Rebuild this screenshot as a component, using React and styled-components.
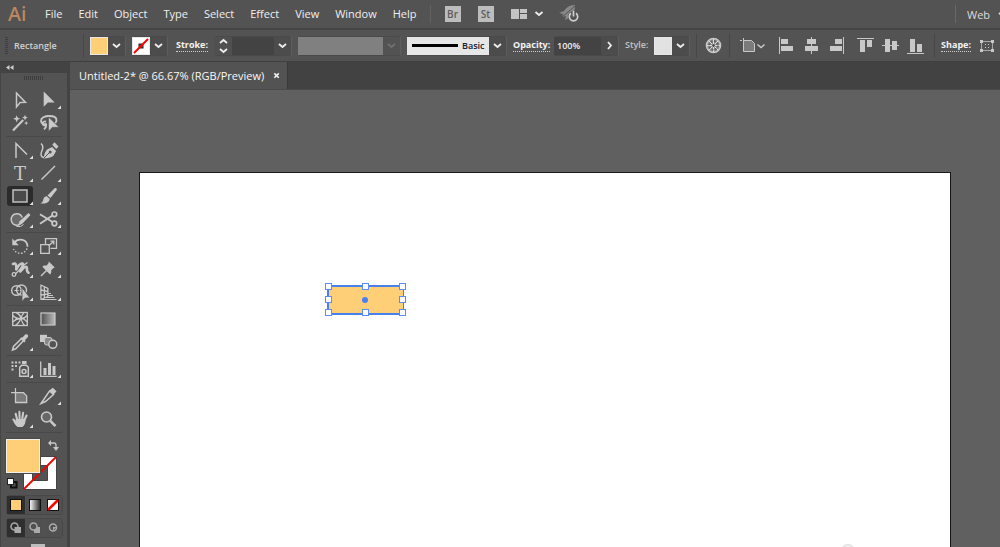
import styled, { createGlobalStyle, css } from 'styled-components';

const GlobalStyle = createGlobalStyle`
  * {
    box-sizing: border-box;
  }

  body {
    margin: 0;
    background-color: #606060;
    font-family: 'Open Sans', 'Noto Sans', sans-serif;
  }

  button,
  input {
    font-family: inherit;
    margin: 0;
    padding: 0;
    border: 0;
    border-radius: 0;
  }

  svg {
    display: block;
    flex: none;
  }
`;

const Window = styled.div`
  display: flex;
  flex-direction: column;
  height: 100vh;
  overflow: hidden;
  color: #e4e4e4;
`;

const MenuBar = styled.header`
  display: flex;
  flex: none;
  align-items: center;
  height: 30px;
  padding-left: 8px;
  background-color: #535353;
  border-bottom: 2px solid #454545;
  overflow: hidden;
`;

const Logo = styled.span`
  width: 29px;
  color: #bd8760;
  font-family: 'Noto Sans', sans-serif;
  font-size: 20px;
  font-weight: 500;
  line-height: 28px;
`;

const Menu = styled.nav`
  display: flex;
`;

const MenuItem = styled.button`
  flex: none;
  padding: 0 8px;
  background: none;
  color: #f0f0f0;
  font-size: 11px;
  line-height: 28px;
`;

const MenuTools = styled.div`
  display: flex;
  align-items: center;
  margin-left: 5px;
  padding-left: 14px;
  border-left: 1px solid #626262;
  height: 18px;
`;

const AppButton = styled.button`
  width: 16px;
  height: 16px;
  margin-right: 17px;
  background-color: #bdbdbd;
  color: #5c5c5c;
  font-size: 10px;
  font-weight: 600;
  line-height: 16px;
`;

const PlainButton = styled.button`
  display: flex;
  flex: none;
  align-items: center;
  justify-content: center;
  width: ${({ $width }) => $width}px;
  height: 22px;
  background: none;
  color: #c8c8c8;
`;

const Workspace = styled.div`
  display: flex;
  align-items: center;
  width: 45px;
  height: 18px;
  margin-left: auto;
  border-left: 1px solid #696969;
  overflow: hidden;
`;

const WorkspaceButton = styled.button`
  display: flex;
  flex: none;
  align-items: center;
  gap: 8px;
  padding-left: 11px;
  background: none;
  color: #dcdcdc;
  font-size: 11px;
`;

const ControlBar = styled.div`
  display: flex;
  flex: none;
  align-items: center;
  gap: 6px;
  height: 31px;
  padding-left: 5px;
  background-color: #535353;
  overflow: hidden;
`;

const Grip = styled.span`
  flex: none;
  width: ${({ $wide }) => ($wide ? 20 : 3)}px;
  height: ${({ $wide }) => ($wide ? 4 : 18)}px;
  background: repeating-linear-gradient(
    ${({ $wide }) => ($wide ? '90deg' : '180deg')},
    #3e3e3e 0 1px,
    #535353 1px 2px
  );
`;

const ObjectName = styled.span`
  flex: none;
  width: 63px;
  color: #d0d0d0;
  font-size: 9px;
  font-weight: 600;
`;

const Divider = styled.span`
  flex: none;
  width: 1px;
  height: 24px;
  background-color: #474747;
`;

const Label = styled.label`
  flex: none;
  width: ${({ $width }) => $width}px;
  color: ${({ $plain }) => ($plain ? '#c4c4c4' : '#f4f4f4')};
  font-size: 9px;
  font-weight: ${({ $plain }) => ($plain ? 600 : 700)};
  line-height: 12px;
  text-align: right;
  white-space: nowrap;

  span {
    display: inline-block;
    border-bottom: 1px ${({ $plain }) => ($plain ? 'solid transparent' : 'dotted #d0d0d0')};
  }
`;

const Field = styled.div`
  display: flex;
  flex: none;
  height: 20px;
  padding: 1px 0;
  background-color: #4a4a4a;
  border-right: 1px solid #5e5e5e;
  border-radius: 2px;
`;

const Swatch = styled.button`
  display: flex;
  align-items: center;
  justify-content: center;
  width: 18px;
  height: 18px;
  background-color: ${({ $color }) => $color};
  border: 1px solid #e8e8e8;
`;

const Arrow = styled.button`
  display: flex;
  align-items: center;
  justify-content: center;
  width: 17px;
  height: 18px;
  background-color: ${({ disabled }) => (disabled ? '#535353' : '#4c4c4c')};
  color: ${({ disabled }) => (disabled ? '#707070' : '#eeeeee')};
`;

const Stepper = styled.div`
  display: flex;
  flex-direction: column;
  width: 18px;
  background-color: #505050;
`;

const Step = styled.button`
  display: flex;
  align-items: center;
  justify-content: center;
  height: 9px;
  background: none;
  color: #eeeeee;
`;

const TextInput = styled.input`
  width: ${({ $width }) => $width}px;
  height: 18px;
  padding-left: 3px;
  background-color: #434343;
  color: #f0f0f0;
  font-size: 9px;
  font-weight: 600;
  outline: none;
`;

const Profile = styled.div`
  width: 85px;
  background-color: #808080;
`;

const Brush = styled.button`
  display: flex;
  align-items: center;
  gap: 4px;
  width: 82px;
  padding-left: 5px;
  background-color: #e6e6e6;
  color: #14202e;
  font-size: 9px;
  font-weight: 600;

  &::before {
    content: '';
    width: 46px;
    height: 3px;
    background-color: #000000;
  }
`;

const AlignTools = styled.div`
  display: flex;
  flex: none;
  gap: 4px;
`;

const AlignGroup = styled.div`
  display: flex;
`;

const Main = styled.div`
  display: flex;
  flex: 1;
  min-height: 0;
  border-top: 1px solid #3f3f3f;
`;

const Panel = styled.aside`
  display: flex;
  flex: none;
  flex-direction: column;
  width: 70px;
  background-color: #535353;
  border-left: 1px solid #454545;
  border-right: 3px solid #434343;
  overflow: hidden;
`;

const PanelHeader = styled.button`
  display: flex;
  flex: none;
  align-items: center;
  height: 11px;
  padding-left: 5px;
  background-color: #434343;
  color: #d0d0d0;
`;

const PanelGrip = styled.div`
  display: flex;
  flex: none;
  justify-content: center;
  padding: 3px 0 7px;
`;

const ToolGroup = styled.div`
  display: grid;
  flex: none;
  grid-template-columns: 26px 26px;
  grid-auto-rows: 23px;
  gap: 0 2px;
  align-items: center;
  margin: 0 5px;
  padding: 1px 0 2px 1px;
  border-bottom: 1px solid #494949;
`;

const ToolButton = styled.button`
  display: flex;
  align-items: center;
  justify-content: center;
  width: 26px;
  height: 20px;
  background: none;
  border-radius: 3px;
  color: #c9c9c9;

  ${({ $active }) =>
    $active &&
    css`
      background-color: #2b2b2b;
    `}
`;

const ColorArea = styled.div`
  position: relative;
  flex: none;
  width: 52px;
  height: 52px;
  margin: 6px 0 4px 5px;
`;

const FillBox = styled.button`
  position: absolute;
  top: 0;
  left: 0;
  width: 34px;
  height: 34px;
  background-color: #ffcf78;
  border: 1px solid #f4efe6;
  outline: 1px solid #4a4a4a;
`;

const StrokeBox = styled.button`
  position: absolute;
  top: 17px;
  left: 17px;
  width: 34px;
  height: 34px;
  background: none;
`;

const CornerButton = styled.button`
  position: absolute;
  top: ${({ $top }) => $top}px;
  left: ${({ $left }) => $left}px;
  background: none;
`;

const ModeRow = styled.div`
  display: flex;
  flex: none;
  gap: 1px;
  width: 57px;
  height: 20px;
  margin: 0 0 3px 5px;
  border: 1px solid #484848;
  border-radius: 3px;
`;

const ModeButton = styled.button`
  display: flex;
  flex: 1;
  align-items: center;
  justify-content: center;
  background-color: ${({ $active }) => ($active ? '#2f2f2f' : '#505050')};
`;

const ScreenMode = styled.button`
  flex: none;
  width: 14px;
  height: 10px;
  margin: 3px 0 0 30px;
  background-color: #bdbdbd;
`;

const DocumentArea = styled.main`
  display: flex;
  flex: 1;
  flex-direction: column;
  min-width: 0;
  background-color: #606060;
`;

const TabBar = styled.div`
  display: flex;
  flex: none;
  height: 28px;
  background-color: #424242;
  border-bottom: 1px solid #4a4a4a;
`;

const Tab = styled.div`
  display: flex;
  align-items: center;
  justify-content: space-between;
  width: 218px;
  padding: 0 6px 0 9px;
  background-color: #535353;
  border-right: 1px solid #3a3a3a;
  color: #f8f8f8;
  font-size: 11px;
  font-weight: 500;
  white-space: nowrap;
`;

const CloseButton = styled.button`
  display: flex;
  background: none;
  color: #f2f2f2;
`;

const Artboard = styled.section`
  position: relative;
  flex: 1;
  margin: 82px 49px 0 69px;
  background-color: #ffffff;
  border: 1px solid #191919;
  border-bottom: 0;
  overflow: hidden;
`;

const Selection = styled.div`
  position: absolute;
  top: 112px;
  left: 187px;
  width: 77px;
  height: 30px;
  background-color: #ffcf78;
  border: 2px solid #4a7ff0;
  border-right-width: 1px;
`;

const Handle = styled.i`
  position: absolute;
  top: ${({ $y }) => $y}%;
  left: ${({ $x }) => $x}%;
  width: 7px;
  height: 7px;
  margin: -4px 0 0 -4px;
  background-color: #ffffff;
  border: 1px solid #5b8bf5;
`;

const Center = styled(Handle)`
  width: 6px;
  height: 6px;
  margin: -3px 0 0 -4px;
  background-color: #4a80f5;
  border: 0;
  border-radius: 50%;
`;

const Watermark = styled.svg`
  position: absolute;
  right: 79px;
  bottom: -10px;
`;

const menuItems = ['File', 'Edit', 'Object', 'Type', 'Select', 'Effect', 'View', 'Window', 'Help'];

const handles = [
  [0, 0],
  [50, 0],
  [100, 0],
  [0, 50],
  [100, 50],
  [0, 100],
  [50, 100],
  [100, 100],
];

const stroke = { fill: 'none', stroke: 'currentColor', strokeWidth: 1.5 };

const toolGroups = [
  [
    { name: 'Selection', icon: <path {...stroke} d="M9.5 4v14l3.6-4.4 5.4-.2z" /> },
    { name: 'Direct selection', more: true, icon: <path fill="currentColor" d="M8.7 2.6v15.2l4.2-4.2h6.8z" /> },
    {
      name: 'Magic wand',
      icon: (
        <>
          <path {...stroke} strokeWidth="2.2" d="M6 18.5 16.2 8" />
          <path
            fill="currentColor"
            d="m9.7 3.2 1 2.6 2.6 1-2.6 1-1 2.6-1-2.6-2.6-1 2.6-1zM18 2.8l.8 2 2 .8-2 .8-.8 2-.8-2-2-.8 2-.8zM19.2 9l.6 1.5 1.5.6-1.5.6-.6 1.5-.6-1.5-1.5-.6 1.5-.6z"
          />
        </>
      ),
    },
    {
      name: 'Lasso',
      icon: (
        <>
          <path
            {...stroke}
            strokeWidth="1.8"
            d="M12 12.5c-3.5.2-6-1.3-6-3.8 0-2.9 3.7-4.7 8.200-4.700s7.300 1.700 7.300 4.200c0 1.200-.5 2.100-1.500 2.800M11 9.600c-1.600-.7-3.400.2-3.400 2 0 2 2.700 2.300 3.300 1 .7 1.700-.2 3.800-2.100 4.500"
          />
          <path fill="currentColor" stroke="#535353" strokeWidth=".6" d="M13.500 5v14.500l3.900-4.200H24z" />
        </>
      ),
    },
  ],
  [
    { name: 'Anchor point', more: true, icon: <path {...stroke} d="M9 19V4.500l11 11" /> },
    {
      name: 'Curvature',
      icon: (
        <>
          <path fill="currentColor" d="M8.500 19.500c.6-4 1.700-7 3.600-9l5-2.600 4 4.200-2.600 4.700c-2.500 1.800-5.800 2.600-10 2.700zM17.300 5.800 19.500 3.300l4 4.200-2.300 2.500z" />
          <path stroke="#535353" d="m8.500 19.500 6-6" />
          <circle cx="15.200" cy="13" r="1.500" fill="#535353" />
          <path {...stroke} d="M6 4.500c3 2.500 2 5.500.5 8.500-1.300 3 0 5.500 2.500 5.500" />
        </>
      ),
    },
    {
      name: 'Type',
      more: true,
      icon: (
        <text x="13" y="18" textAnchor="middle" fill="currentColor" fontFamily="'DejaVu Serif', serif" fontSize="18">
          T
        </text>
      ),
    },
    { name: 'Line segment', more: true, icon: <path {...stroke} d="M6.5 17.5 20 4" /> },
    { name: 'Rectangle', more: true, active: true, icon: <rect x="6" y="5" width="14" height="12" fill="#4a4a4a" stroke="currentColor" strokeWidth="1.4" /> },
    {
      name: 'Paintbrush',
      more: true,
      icon: <path fill="currentColor" d="M19.600 3.200c1.400-.9 2.900.6 2.100 1.900l-6.200 8-3-2.700zM11.800 11.200l2.800 2.600c.2 3.800-3.800 5.300-9.300 4.500 2.700-.8 2.600-2.500 3.200-4.600.5-1.600 1.700-2.600 3.300-2.500z" />,
    },
    {
      name: 'Shaper',
      more: true,
      icon: (
        <>
          <path fill="#6a6a6a" stroke="currentColor" strokeWidth="1.5" d="M13.500 16a5.800 5.800 0 1 1 1.800-6.600" />
          <path fill="currentColor" d="m21.500 5 2 1.900-8 8.700-4.500 2 1.600-4.300z" />
          <path {...stroke} strokeWidth="1" d="M9.500 18.500h4l3-2" />
        </>
      ),
    },
    {
      name: 'Scissors',
      more: true,
      icon: (
        <>
          <circle {...stroke} strokeWidth="1.7" cx="19.4" cy="6.3" r="2.3" />
          <circle {...stroke} strokeWidth="1.7" cx="19.4" cy="15.5" r="2.3" />
          <path {...stroke} strokeWidth="1.9" d="M5 6.2 17.5 14M5 15.8 17.5 7.5" />
        </>
      ),
    },
  ],
  [
    {
      name: 'Rotate',
      more: true,
      icon: (
        <>
          <path {...stroke} strokeWidth="1.8" d="M7.5 7.5c3.800-5 13-3.200 13 4.300" />
          <path {...stroke} strokeDasharray="1.5 1.7" d="M20 13.5c-2.300 6.300-10.500 6.300-13.500.5" />
          <path fill="currentColor" d="M5.3 3.500v6.800h6.500z" />
        </>
      ),
    },
    {
      name: 'Scale',
      more: true,
      icon: (
        <g {...stroke} strokeWidth="1.3">
          <path d="M10.5 9.500V3.700h11v9.600h-6" />
          <path d="M5.7 9.700h8.600v8.600H5.700zM13.500 11l5-4.500M15.500 6.200h3.300v3.300" />
        </g>
      ),
    },
    {
      name: 'Width',
      more: true,
      icon: (
        <>
          <path {...stroke} strokeWidth="2.6" strokeLinecap="round" strokeLinejoin="round" d="M6 6c3-1.500 3.600 1 3.300 5.500C11 8 13 5 15.500 5.500c2 .8-1.500 4.500-2.300 8 2.800-3 4.800-5.500 6.300-4.500 1.300 1-.8 4.500 2 5.700" />
          <path {...stroke} strokeWidth="1.2" d="m8 16.500 9-9.500 3.500-2.500" />
          <circle cx="7" cy="16.500" r="1.800" fill="#535353" stroke="currentColor" strokeWidth="1.300" />
        </>
      ),
    },
    {
      name: 'Puppet warp',
      more: true,
      icon: (
        <>
          <path fill="currentColor" d="m13.8 3.500 6 6-1.600.7-2 2c.3 1.900 0 3.200-1.200 4.300L7.300 8.800c1.100-1.200 2.500-1.500 4.300-1.200l1.800-2z" />
          <path {...stroke} d="m6 18 5.500-5.500" />
        </>
      ),
    },
    {
      name: 'Shape builder',
      more: true,
      icon: (
        <>
          <circle {...stroke} strokeWidth="1.4" cx="9.500" cy="9.500" r="4.800" />
          <circle {...stroke} strokeWidth="1.4" cx="14.500" cy="9" r="5" />
          <path {...stroke} strokeDasharray="1.5 1.2" strokeWidth="1.2" d="M7.5 9.500h8" />
          <path fill="currentColor" stroke="#535353" strokeWidth=".8" d="M15 6.500v14l3.200-3.500H23z" />
        </>
      ),
    },
    {
      name: 'Perspective grid',
      more: true,
      icon: (
        <>
          <path {...stroke} strokeWidth="1.3" d="M5.900 3.500v15.300M5.900 4l7 3.500v8.300M9.400 5.600v11.300M5.900 9l7 1.500M5.900 14l7-1M5.900 18.500l7-3" />
          <path {...stroke} strokeWidth="1" d="M6 18.500h15.500M10 16.500h9.500M13 14.500h5M13 12.500h3" />
        </>
      ),
    },
  ],
  [
    {
      name: 'Mesh',
      icon: (
        <>
          <rect {...stroke} strokeWidth="1.3" x="5.7" y="4.5" width="14.6" height="13" />
          <path {...stroke} strokeWidth="1.4" d="M9 4.500c6 3 6.500 7-.5 13M17 4.500c-3 3-4 8 .5 13M5.700 7.500c4 4 10 5 14.600 0M5.700 14c4-4 10-5.500 14.600 0" />
        </>
      ),
    },
    { name: 'Gradient', icon: <rect x="6" y="5" width="14" height="12" fill="url(#tool-gradient)" stroke="currentColor" strokeWidth="1.2" /> },
    {
      name: 'Eyedropper',
      more: true,
      icon: (
        <>
          <path fill="currentColor" d="m14.2 6.500 1.500-.2 2.300-2.500c1.800-1.600 4.200.8 2.700 2.500l-2.400 2.500v1.600l-1.200 1-4-3.800z" />
          <path {...stroke} d="m14 8-7.500 7.500-1 3.500 3.200-1.200L16.200 10" />
        </>
      ),
    },
    {
      name: 'Blend',
      icon: (
        <>
          <path fill="currentColor" d="M5 3.800h7V11H5z" />
          <rect x="9.5" y="6.5" width="7.5" height="7.5" rx="2" fill="#8a8a8a" stroke="currentColor" />
          <circle cx="17.8" cy="13.3" r="4" fill="#535353" stroke="currentColor" strokeWidth="1.5" />
        </>
      ),
    },
  ],
  [
    {
      name: 'Symbol sprayer',
      more: true,
      icon: (
        <>
          <path fill="currentColor" d="M4.500 3.500h2v2h-2zM8 3.500h2v2H8zM11.500 3.500h2v2h-2zM4.500 7h2v2h-2zM8 7h2v2H8zM4.500 10.500h2v2h-2zM15 3h4.500v3H15z" />
          <path {...stroke} d="M12.700 18.300v-9l2-2h4.600l2 2v9z" />
          <circle {...stroke} cx="17" cy="13.5" r="2" />
        </>
      ),
    },
    {
      name: 'Column graph',
      more: true,
      icon: (
        <>
          <path {...stroke} strokeWidth="1.3" d="M5.700 3.500v14.800h16" />
          <path fill="currentColor" d="M8.500 10h3v7h-3zM13 5h3v12h-3zM17.500 8h3v9h-3z" />
        </>
      ),
    },
  ],
  [
    {
      name: 'Artboard',
      icon: (
        <>
          <path {...stroke} strokeWidth="1.2" d="M8.500 3v6M4 7.700h8" />
          <path fill="#7a7a7a" stroke="currentColor" strokeWidth="1.3" d="M8.500 7.700h8l3.200 3.200v6.600H8.500z" />
        </>
      ),
    },
    {
      name: 'Slice',
      more: true,
      icon: (
        <>
          <path {...stroke} d="M6 18.500 14.500 6l4 3.500-8 7z" />
          <path fill="currentColor" d="m14.300 5.500 3.500-2.800 3.700 3.600-3 3.500z" />
        </>
      ),
    },
    {
      name: 'Hand',
      more: true,
      icon: (
        <>
          <path stroke="currentColor" strokeWidth="2.1" strokeLinecap="round" d="m10 11-1.300-5.300M12.600 10l-.2-6.300M15.300 10.500l.8-5.700M17.500 12l2-4.500M9.300 14.500l-3-3" />
          <path fill="currentColor" d="m8.800 10.500 9.600.5c.5 3.500-.7 6.500-3 8h-4.600c-1.900-1.500-3.500-3.200-4.600-5.800l2.600.6z" />
        </>
      ),
    },
    {
      name: 'Zoom',
      icon: (
        <>
          <circle cx="11.5" cy="9" r="5" fill="#676767" stroke="currentColor" strokeWidth="1.6" />
          <path {...stroke} strokeWidth="2.6" d="m15.300 12.800 5.200 5.400" />
        </>
      ),
    },
  ],
];

const alignGroups = [
  [
    { name: 'Align left', line: 'M2.5 1v17', bars: 'M4 3h7v5H4zM4 10h12v5H4z' },
    { name: 'Align center', line: 'M9.5 1v17', bars: 'M5 3h9v5H5zM3 10h13v5H3z' },
    { name: 'Align right', line: 'M16.5 1v17', bars: 'M8 3h7v5H8zM3 10h12v5H3z' },
  ],
  [
    { name: 'Align top', line: 'M1 2.5h17', bars: 'M4 4h5v12H4zM11 4h5v7h-5z' },
    { name: 'Align middle', line: 'M1 9.5h17', bars: 'M4 3h5v13H4zM11 5h5v9h-5z' },
    { name: 'Align bottom', line: 'M1 17.5h17', bars: 'M4 3h5v13H4zM11 8h5v8h-5z' },
  ],
];

function Chevron({ points = 'M1 3l3.5 3L8 3', size = 9, width = 1.8 }) {
  return (
    <svg width={size} height={size} viewBox="0 0 9 9">
      <path d={points} fill="none" stroke="currentColor" strokeWidth={width} />
    </svg>
  );
}

function Tool({ name, icon, more, active }) {
  return (
    <ToolButton type="button" aria-label={name} $active={active}>
      <svg width="26" height="22" viewBox="0 0 26 22">
        {icon}
        {more && <path fill="#e0e0e0" d="M26 16.500V20h-3.500z" />}
      </svg>
    </ToolButton>
  );
}

function TopMenu() {
  return (
    <MenuBar>
      <Logo>Ai</Logo>
      <Menu>
        {menuItems.map((item) => (
          <MenuItem type="button" key={item}>
            {item}
          </MenuItem>
        ))}
      </Menu>
      <MenuTools>
        <AppButton type="button">Br</AppButton>
        <AppButton type="button">St</AppButton>
        <PlainButton type="button" aria-label="Arrange documents" $width={34}>
          <svg width="34" height="12" viewBox="0 0 34 12">
            <path fill="#c4c4c4" d="M0 1h8v10H0zM9 1h7v4H9zM9 6h7v5H9z" />
            <path fill="none" stroke="#f0f0f0" strokeWidth="1.8" d="m24.500 4 3.500 3 3.500-3" />
          </svg>
        </PlainButton>
        <PlainButton type="button" aria-label="GPU performance" $width={48}>
          <svg width="22" height="20" viewBox="0 0 22 20">
            <path fill="#888888" d="M17 1c-6 0-9 3-11 6L1 9l4 1-1 3 4-1-1 4 4-2c4-3 6-7 6-13z" />
            <path stroke="#535353" d="M4 13 17 2" />
            <circle cx="15.5" cy="12.5" r="5.500" fill="#535353" />
            <path fill="none" stroke="#cfcfcf" strokeWidth="1.7" d="M13 9.300a4.200 4.200 0 1 0 5 0M15.500 7v5.500" />
          </svg>
        </PlainButton>
      </MenuTools>
      <Workspace>
        <WorkspaceButton type="button">
          Web
          <Chevron />
        </WorkspaceButton>
      </Workspace>
    </MenuBar>
  );
}

function Controls() {
  return (
    <ControlBar>
      <Grip />
      <ObjectName>Rectangle</ObjectName>
      <Divider />
      <Field>
        <Swatch type="button" aria-label="Fill" $color="#ffcf78" />
        <Arrow type="button" aria-label="Fill options">
          <Chevron />
        </Arrow>
      </Field>
      <Field>
        <Swatch type="button" aria-label="Stroke color" $color="#ffffff">
          <svg width="16" height="16" viewBox="0 0 16 16">
            <rect x="6" y="6" width="4" height="4" fill="#555555" stroke="#222222" />
            <path stroke="#ff0000" strokeWidth="2" d="M1 15 15 1" />
          </svg>
        </Swatch>
        <Arrow type="button" aria-label="Stroke options">
          <Chevron />
        </Arrow>
      </Field>
      <Label htmlFor="stroke-weight" $width={34}>
        <span>Stroke:</span>
      </Label>
      <Field>
        <Stepper>
          <Step type="button" aria-label="Increase stroke">
            <Chevron points="M1 6l3.5-3L8 6" />
          </Step>
          <Step type="button" aria-label="Decrease stroke">
            <Chevron />
          </Step>
        </Stepper>
        <TextInput id="stroke-weight" $width={42} />
        <Arrow type="button" aria-label="Stroke weights">
          <Chevron />
        </Arrow>
      </Field>
      <Field>
        <Profile />
        <Arrow type="button" aria-label="Width profile" disabled>
          <Chevron />
        </Arrow>
      </Field>
      <Field>
        <Brush type="button">Basic</Brush>
        <Arrow type="button" aria-label="Brushes">
          <Chevron />
        </Arrow>
      </Field>
      <Label htmlFor="opacity" $width={35}>
        <span>Opacity:</span>
      </Label>
      <Field>
        <TextInput id="opacity" defaultValue="100%" $width={47} />
        <Arrow type="button" aria-label="Opacity slider">
          <Chevron points="M3 1l3 3.5L3 8" />
        </Arrow>
      </Field>
      <Label htmlFor="graphic-style" $width={23} $plain>
        <span>Style:</span>
      </Label>
      <Field>
        <Swatch type="button" id="graphic-style" $color="#e2e2e2" />
        <Arrow type="button" aria-label="Graphic styles">
          <Chevron />
        </Arrow>
      </Field>
      <Divider />
      <PlainButton type="button" aria-label="Recolor artwork" $width={20}>
        <svg width="17" height="17" viewBox="0 0 17 17">
          <circle cx="8.5" cy="8.5" r="7" fill="#8c8c8c" stroke="currentColor" strokeWidth="1.6" />
          <path stroke="#e0e0e0" d="M8.500 2v13M2 8.500h13M4 4l9 9M13 4l-9 9" />
          <circle cx="8.5" cy="8.5" r="4.3" fill="none" stroke="#5c5c5c" strokeWidth="1.8" strokeDasharray="1.8 1.57" />
          <circle cx="8.5" cy="8.5" r="1.4" fill="#484848" />
        </svg>
      </PlainButton>
      <Divider />
      <PlainButton type="button" aria-label="Align to" $width={32}>
        <svg width="26" height="18" viewBox="0 0 26 18">
          <path fill="none" stroke="currentColor" strokeDasharray="2 1" d="M4.500 1v4M1 3.500h4" />
          <path fill="#7b7b7b" stroke="currentColor" d="M4.500 3.500h8l3 3v8h-11z" />
          <path fill="none" stroke="currentColor" strokeWidth="1.5" d="m18.500 7.500 3.500 3 3.500-3" />
        </svg>
      </PlainButton>
      <AlignTools>
        {alignGroups.map((group) => (
          <AlignGroup key={group[0].name}>
            {group.map(({ name, line, bars }) => (
              <PlainButton type="button" key={name} aria-label={name} $width={25}>
                <svg width="19" height="19" viewBox="0 0 19 19">
                  <path stroke="currentColor" d={line} />
                  <path fill="currentColor" d={bars} />
                </svg>
              </PlainButton>
            ))}
          </AlignGroup>
        ))}
      </AlignTools>
      <Divider />
      <Label as="span" $width={30}>
        <span>Shape:</span>
      </Label>
      <PlainButton type="button" aria-label="Shape options" $width={20}>
        <svg width="16" height="14" viewBox="0 0 16 14">
          <rect x="2.5" y="2.5" width="11" height="9" fill="none" stroke="#a8a8a8" />
          <path fill="#c8c8c8" d="M1 1h3v3H1zM12 1h3v3h-3zM1 10h3v3H1zM12 10h3v3h-3z" />
          <path fill="none" stroke="#c8c8c8" strokeDasharray="1 2" d="M6 5.500h6M6 8.500h6" />
        </svg>
      </PlainButton>
    </ControlBar>
  );
}

function NoneIcon() {
  return (
    <svg width="12" height="12" viewBox="0 0 12 12">
      <rect x=".5" y=".5" width="11" height="11" fill="#ffffff" stroke="#111111" />
      <path stroke="#ff0000" strokeWidth="2.5" d="M1 11 11 1" />
    </svg>
  );
}

function ToolPanel() {
  return (
    <Panel>
      <PanelHeader type="button" aria-label="Collapse panel">
        <svg width="8" height="5" viewBox="0 0 8 5">
          <path fill="currentColor" d="M3.500 0v5L0 2.500zM7.500 0v5L4 2.500z" />
        </svg>
      </PanelHeader>
      <PanelGrip>
        <Grip $wide />
      </PanelGrip>
      {toolGroups.map((group) => (
        <ToolGroup key={group[0].name}>
          {group.map((tool) => (
            <Tool key={tool.name} {...tool} />
          ))}
        </ToolGroup>
      ))}
      <ColorArea>
        <StrokeBox type="button" aria-label="Stroke">
          <svg width="34" height="34" viewBox="0 0 34 34">
            <path fill="#ffffff" stroke="#444444" fillRule="evenodd" d="M.5.500h33v33H.5zM9.500 9.500v15h15v-15z" />
            <path stroke="#f00000" strokeWidth="1.8" d="m1 33 32-32" />
          </svg>
        </StrokeBox>
        <FillBox type="button" aria-label="Fill" />
        <CornerButton type="button" aria-label="Swap fill and stroke" $top={1} $left={42}>
          <svg width="11" height="11" viewBox="0 0 11 11">
            <path fill="none" stroke="#c8c8c8" strokeWidth="1.3" d="M2 3h4q2 0 2 2v4" />
            <path fill="#c8c8c8" d="M3 0v6L0 3zM5 7h6l-3 4z" />
          </svg>
        </CornerButton>
        <CornerButton type="button" aria-label="Default fill and stroke" $top={39} $left={1}>
          <svg width="11" height="11" viewBox="0 0 11 11">
            <rect x="4" y="4" width="5.5" height="5.5" fill="none" stroke="#111111" strokeWidth="2" />
            <rect x=".5" y=".5" width="6" height="6" fill="#ffffff" stroke="#222222" />
          </svg>
        </CornerButton>
      </ColorArea>
      <ModeRow>
        <ModeButton type="button" aria-label="Color" $active>
          <svg width="12" height="12">
            <rect x=".5" y=".5" width="11" height="11" fill="#ffcf78" stroke="#111111" />
          </svg>
        </ModeButton>
        <ModeButton type="button" aria-label="Gradient">
          <svg width="12" height="12">
            <rect x=".5" y=".5" width="11" height="11" fill="url(#mode-gradient)" stroke="#111111" />
          </svg>
        </ModeButton>
        <ModeButton type="button" aria-label="None">
          <NoneIcon />
        </ModeButton>
      </ModeRow>
      <ModeRow>
        <ModeButton type="button" aria-label="Draw normal" $active>
          <svg width="12" height="12" viewBox="0 0 12 12">
            <circle cx="4.5" cy="4.5" r="3.5" fill="none" stroke="#aaaaaa" strokeWidth="1.5" />
            <path fill="#aaaaaa" d="M4.500 5H11v6H4.500z" />
          </svg>
        </ModeButton>
        <ModeButton type="button" aria-label="Draw behind">
          <svg width="12" height="12" viewBox="0 0 12 12">
            <path fill="#aaaaaa" d="M5 5h6v6H5z" />
            <circle cx="4.5" cy="4.5" r="3.5" fill="#505050" stroke="#aaaaaa" strokeWidth="1.5" />
          </svg>
        </ModeButton>
        <ModeButton type="button" aria-label="Draw inside">
          <svg width="12" height="12" viewBox="0 0 12 12">
            <circle cx="6" cy="5.5" r="3.5" fill="none" stroke="#aaaaaa" strokeWidth="1.5" />
            <path fill="#aaaaaa" d="M6 5h3.500L6 8.500z" />
          </svg>
        </ModeButton>
      </ModeRow>
      <ScreenMode type="button" aria-label="Change screen mode" />
    </Panel>
  );
}

function Canvas() {
  return (
    <DocumentArea>
      <TabBar>
        <Tab>
          Untitled-2* @ 66.67% (RGB/Preview)
          <CloseButton type="button" aria-label="Close document">
            <Chevron points="M1.5 1.5l5 5M6.5 1.5l-5 5" size={8} />
          </CloseButton>
        </Tab>
      </TabBar>
      <Artboard>
        <Selection>
          {handles.map(([x, y]) => (
            <Handle key={`${x}-${y}`} $x={x} $y={y} />
          ))}
          <Center $x={50} $y={50} />
        </Selection>
        <Watermark width="32" height="14" viewBox="0 0 32 14">
          <circle cx="9" cy="8" r="6" fill="none" stroke="#e2e2e2" strokeWidth="2" />
          <circle cx="24" cy="9" r="5" fill="#e2e2e2" />
        </Watermark>
      </Artboard>
    </DocumentArea>
  );
}

function Gradients() {
  return (
    <svg width="0" height="0" style={{ position: 'absolute' }}>
      <linearGradient id="tool-gradient">
        <stop offset="0" stopColor="#4e4e4e" />
        <stop offset="1" stopColor="#bcbcbc" />
      </linearGradient>
      <linearGradient id="mode-gradient">
        <stop offset="0" stopColor="#ffffff" />
        <stop offset="1" stopColor="#222222" />
      </linearGradient>
    </svg>
  );
}

export default function App() {
  return (
    <Window>
      <GlobalStyle />
      <Gradients />
      <TopMenu />
      <Controls />
      <Main>
        <ToolPanel />
        <Canvas />
      </Main>
    </Window>
  );
}
